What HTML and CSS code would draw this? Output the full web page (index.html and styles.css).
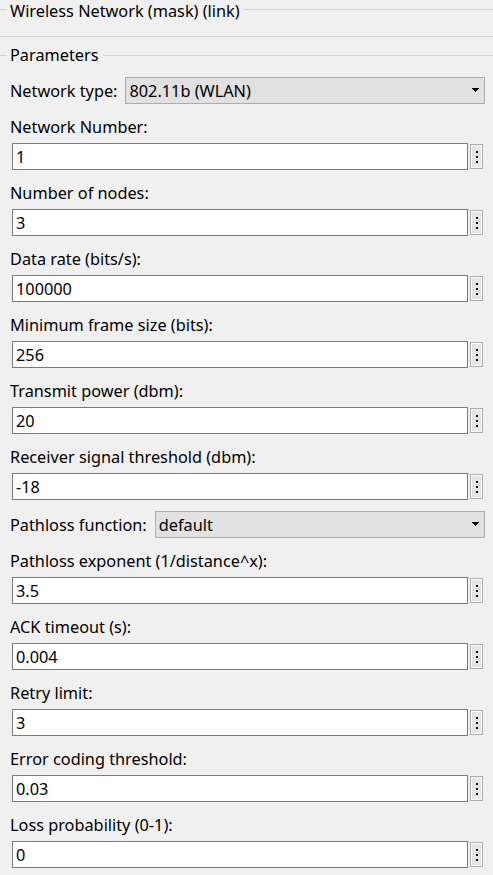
FILE: index.html
```html
<!DOCTYPE html>
<html>
<head>
<meta charset="utf-8">
<link rel="stylesheet" href="styles.css">
</head>
<body>
<div class="head-row">
  <span class="lead"></span><span class="head-text">Wireless Network (mask) (link)</span><span class="rule"></span>
</div>
<div class="sep"></div>
<div class="group-row">
  <span class="lead"></span><span class="head-text">Parameters</span><span class="rule"></span>
</div>
<div class="params">
  <div class="select-row first">
    <span class="select-label">Network type:</span>
    <div class="select"><span>802.11b (WLAN)</span><svg class="arrow" width="7" height="4" viewBox="0 0 7 4"><path d="M0 0h7v1h-1v1h-1v1h-1v1h-1v-1h-1v-1h-1v-1h-1z" fill="#000"/></svg></div>
  </div>

  <div class="label">Network Number:</div>
  <div class="input-row"><div class="input">1</div><div class="more"><i></i><i></i><i></i></div></div>

  <div class="label">Number of nodes:</div>
  <div class="input-row"><div class="input">3</div><div class="more"><i></i><i></i><i></i></div></div>

  <div class="label">Data rate (bits/s):</div>
  <div class="input-row"><div class="input">100000</div><div class="more"><i></i><i></i><i></i></div></div>

  <div class="label">Minimum frame size (bits):</div>
  <div class="input-row"><div class="input">256</div><div class="more"><i></i><i></i><i></i></div></div>

  <div class="label">Transmit power (dbm):</div>
  <div class="input-row"><div class="input">20</div><div class="more"><i></i><i></i><i></i></div></div>

  <div class="label">Receiver signal threshold (dbm):</div>
  <div class="input-row"><div class="input">-18</div><div class="more"><i></i><i></i><i></i></div></div>

  <div class="select-row second">
    <span class="select-label">Pathloss function:</span>
    <div class="select"><span>default</span><svg class="arrow" width="7" height="4" viewBox="0 0 7 4"><path d="M0 0h7v1h-1v1h-1v1h-1v1h-1v-1h-1v-1h-1v-1h-1z" fill="#000"/></svg></div>
  </div>

  <div class="label">Pathloss exponent (1/distance^x):</div>
  <div class="input-row"><div class="input">3.5</div><div class="more"><i></i><i></i><i></i></div></div>

  <div class="label">ACK timeout (s):</div>
  <div class="input-row"><div class="input">0.004</div><div class="more"><i></i><i></i><i></i></div></div>

  <div class="label">Retry limit:</div>
  <div class="input-row"><div class="input">3</div><div class="more"><i></i><i></i><i></i></div></div>

  <div class="label">Error coding threshold:</div>
  <div class="input-row"><div class="input">0.03</div><div class="more"><i></i><i></i><i></i></div></div>

  <div class="label">Loss probability (0-1):</div>
  <div class="input-row"><div class="input">0</div><div class="more"><i></i><i></i><i></i></div></div>
</div>
</body>
</html>
```

FILE: styles.css
```css
html, body {
  margin: 0;
  padding: 0;
  background: #f0f0f0;
}
body {
  font-family: "Noto Sans", "Open Sans", sans-serif;
  font-size: 16.3px;
  color: #000;
  width: 493px;
  overflow: hidden;
}
.head-row, .group-row {
  display: flex;
  align-items: flex-start;
}
.head-row {
  height: 22px;
  line-height: 22px;
}
.head-row .lead, .head-row .rule {
  margin-top: 9px;
}
.group-row {
  margin-top: 9px;
  height: 19px;
  line-height: 19px;
  align-items: center;
}
.lead {
  width: 7px;
  height: 1px;
  background: #d5d5d5;
  margin-right: 3px;
  flex: none;
}
.head-text {
  flex: none;
  white-space: nowrap;
}
.rule {
  flex: 1;
  height: 1px;
  background: #d5d5d5;
  margin-left: 4px;
}
.sep {
  margin-top: 14px;
  height: 1px;
  background: #d5d5d5;
}
.params {
  padding: 0 10px;
}
.select-row {
  display: flex;
  align-items: center;
  height: 27px;
  margin-right: -2px;
}
.select-row.first {
  margin-top: 12px;
}
.select-row.second {
  margin-top: 11px;
}
.select-label {
  flex: none;
  white-space: nowrap;
  margin-right: 8px;
}
.select {
  flex: 1;
  height: 27px;
  box-sizing: border-box;
  border: 1px solid #adadad;
  background: #e1e1e1;
  display: flex;
  align-items: center;
  justify-content: space-between;
  padding: 0 5px 0 3px;
  line-height: 20px;
}
.arrow {
  display: block;
  shape-rendering: crispEdges;
  margin-top: -1px;
}
.label {
  height: 39px;
  box-sizing: border-box;
  display: flex;
  align-items: flex-end;
  line-height: 20px;
  padding-bottom: 6px;
  white-space: nowrap;
}
.input-row {
  display: flex;
  align-items: flex-start;
  gap: 2px;
  margin-left: 2px;
}
.input {
  flex: 1;
  height: 27px;
  box-sizing: border-box;
  border: 1px solid #7a7a7a;
  background: #fff;
  padding-left: 3px;
  display: flex;
  align-items: center;
  line-height: 20px;
}
.more {
  flex: none;
  width: 13px;
  height: 25px;
  margin-top: 1px;
  box-sizing: border-box;
  border: 1px solid #adadad;
  background: #e5e5e5;
  box-shadow: inset 0 0 0 1px #fafafa;
  display: flex;
  flex-direction: column;
  align-items: center;
  justify-content: center;
  gap: 3px;
}
.more i {
  display: block;
  width: 2px;
  height: 2px;
  background: #111;
}
```
